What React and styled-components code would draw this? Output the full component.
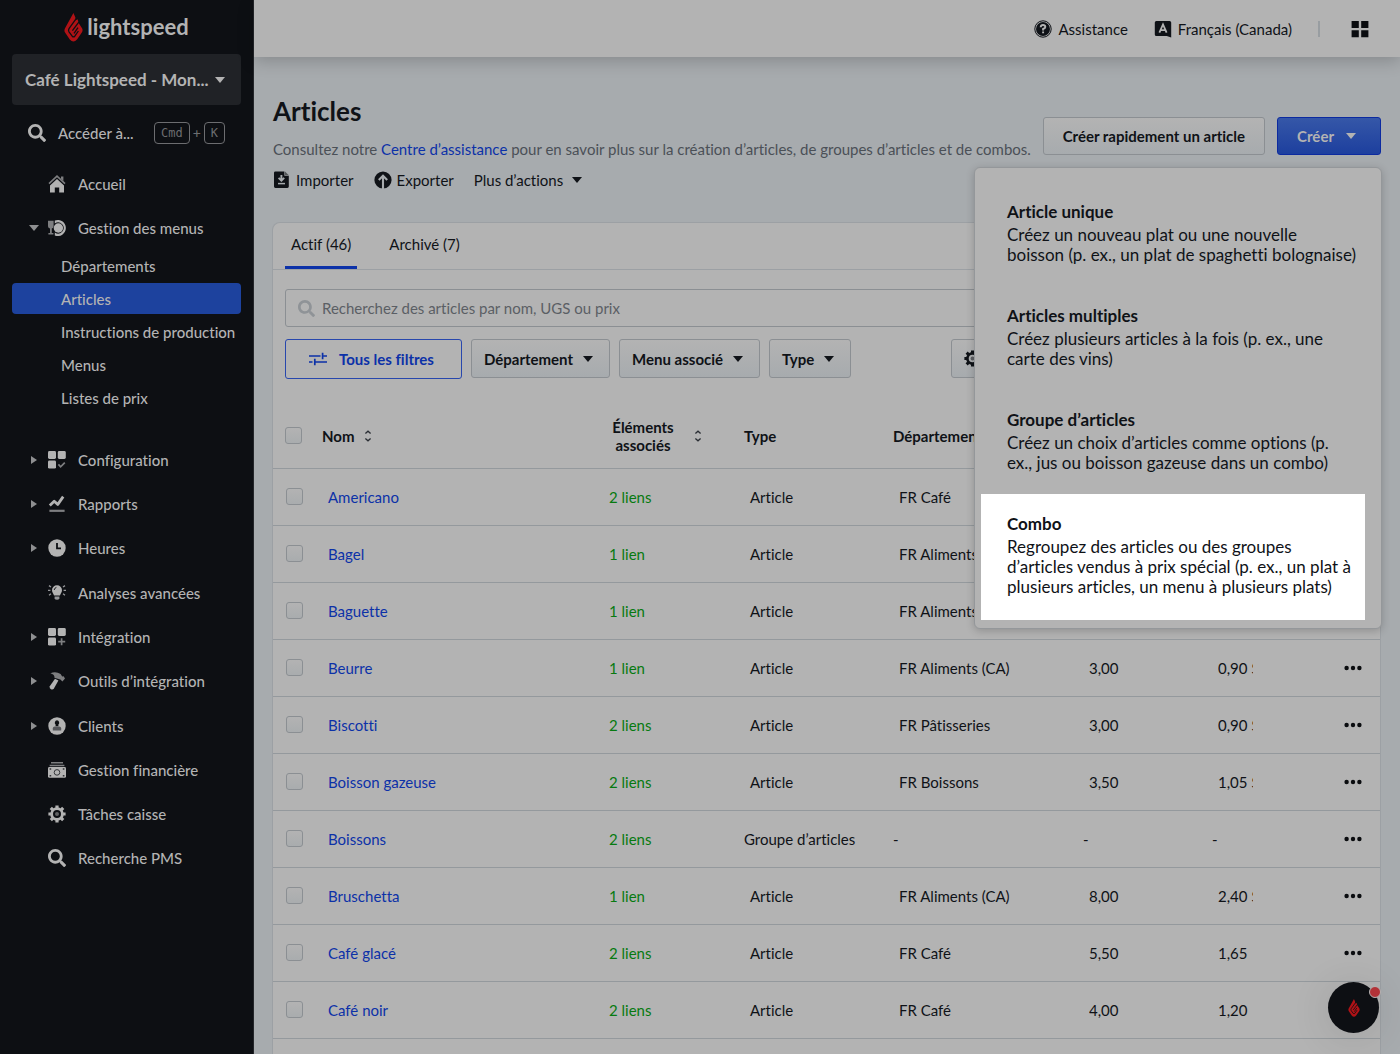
import React, { useState } from 'react';
import styled, { createGlobalStyle, css } from 'styled-components';
import { FaSearch } from 'react-icons/fa';

const GlobalStyle = createGlobalStyle`
  * {
    box-sizing: border-box;
  }

  body {
    margin: 0;
    background: #a7abae;
    color: #0f1217;
    font-family: Lato, 'Liberation Sans', sans-serif;
    font-size: 15px;
    line-height: 20px;
    font-variant-ligatures: no-common-ligatures;
  }

  button,
  input {
    font: inherit;
    font-variant-ligatures: inherit;
    color: inherit;
  }

  a {
    color: inherit;
    text-decoration: none;
  }
`;

/* ---------- Icons ---------- */

const Flame = ({ width, height }) => (
  <svg width={width} height={height} viewBox="0 0 19 29" aria-hidden="true">
    <path
      d="M9.4 0 L11.4 4.4 L11.2 7.4 L13.6 6.2 L14.8 10.2 L18.2 15.5 Q19 17.4 18 19.2 L13 26.4 Q9.4 30.4 5.8 26.4 L0.9 19.2 Q0 17.4 0.9 15.5 Z"
      fill="#b01216"
    />
    <g fill="none" stroke="#0d0f13" strokeWidth="1.3">
      <path d="M12 5.8 L5 15.6 Q4 17.2 5 18.8 L8.2 23.2 Q9.5 24.6 10.8 23.2 L14.4 18" />
      <path d="M15 8.8 L8.4 17.6" />
      <path d="M10 20.4 L14 14.6" />
    </g>
  </svg>
);

const HomeIcon = () => (
  <svg width="18" height="18" viewBox="0 0 18 18" aria-hidden="true">
    <path d="M1 8.6 L9 1.2 L17 8.6" fill="none" stroke="#7d7e80" strokeWidth="1.6" />
    <path d="M13 1.5h2.4v4.4L13 3.8z" fill="#7d7e80" />
    <path d="M9 4 L16 10.4 V17.4 H11.2 V12.4 H6.8 V17.4 H2 V10.4 Z" fill="currentColor" />
  </svg>
);

const PlateIcon = () => (
  <svg width="18" height="18" viewBox="0 0 18 18" aria-hidden="true">
    <path d="M0 1.8h5.6v5.4q0 2-1.8 2.4v4.4h1.6v1.6H0.4V14H2V9.6Q0 9.2 0 7.2z" fill="#7d7e80" />
    <path d="M6.8 1.6 A8 8 0 1 1 6.8 16.4 V13.6 A5.6 5.6 0 1 0 6.8 4.4z" fill="currentColor" />
    <circle cx="10.4" cy="9" r="4.7" fill="currentColor" />
  </svg>
);

const TilesIcon = ({ mark }) => (
  <svg width="18" height="18" viewBox="0 0 18 18" aria-hidden="true">
    <rect width="8" height="8" rx="1.4" fill="currentColor" />
    <rect x="9.8" width="8" height="8" rx="1.4" fill="currentColor" />
    <rect y="9.6" width="8" height="8" rx="1.4" fill="currentColor" />
    <path d={mark === 'plus' ? 'M13.6 10.2v7M10.2 13.7h7' : 'M10.4 13.4l2.2 2.4 4.2-4.2'} fill="none" stroke="#7d7e80" strokeWidth="1.7" />
  </svg>
);

const ChartIcon = () => (
  <svg width="18" height="18" viewBox="0 0 18 18" aria-hidden="true">
    <path d="M1.8 10.4 L6.2 6.2 L9.8 9.4 L15.2 1.6" fill="none" stroke="currentColor" strokeWidth="2.8" strokeLinejoin="round" />
    <path d="M1.4 15.8h15.2" stroke="#7d7e80" strokeWidth="2.2" />
  </svg>
);

const ClockIcon = () => (
  <svg width="18" height="18" viewBox="0 0 18 18" aria-hidden="true">
    <circle cx="9" cy="9" r="8.7" fill="currentColor" />
    <path d="M9 4v5.4h4" fill="none" stroke="#0d0f13" strokeWidth="1.8" />
  </svg>
);

const BulbIcon = () => (
  <svg width="18" height="18" viewBox="0 0 18 18" aria-hidden="true">
    <path d="M9 1.2a5 5 0 0 1 5 5c0 2.4-1.6 3.4-2 5.4H6C5.6 9.6 4 8.6 4 6.2a5 5 0 0 1 5-5z" fill="currentColor" />
    <path d="M6.6 12.6h4.8v1.6q-.4 1.6-2.4 1.6t-2.4-1.6z" fill="#96979a" />
    <path d="M0 6.4h2.4M15.6 6.4H18M1 1.6l2 1.4M17 1.6l-2 1.4M1 11.2l2-1.4M17 11.2l-2-1.4" stroke="#96979a" strokeWidth="1.3" />
    <path d="M6.2 6q.2-2 2.2-2.6" fill="none" stroke="#0d0f13" strokeWidth="0.9" />
  </svg>
);

const HammerIcon = () => (
  <svg width="18" height="18" viewBox="0 0 18 18" aria-hidden="true">
    <path d="M2.4 1.2Q8 -.8 12.6 2l1.6 2.6 1.4-.4L17 6.4l-2.6 3-2-2-1-.2-5-1.4Q7 2.6 2.4 1.2z" fill="#7d7e80" />
    <path d="M7 6.8l3.4 1.6-4.6 8.4q-1.2 1.2-2.8.4T1.6 14.4z" fill="currentColor" />
  </svg>
);

const ClientIcon = () => (
  <svg width="18" height="18" viewBox="0 0 18 18" aria-hidden="true">
    <circle cx="9" cy="9" r="8.7" fill="currentColor" />
    <path d="M9 3.2a2.3 2.5 0 0 1 1.4 4.4v1.6H7.6V7.6A2.3 2.5 0 0 1 9 3.2z" fill="#0d0f13" />
    <path d="M4.8 13.6V11.6q0-2 2-2h4.4q2 0 2 2v2z" fill="#55565a" />
  </svg>
);

const CashIcon = () => (
  <svg width="18" height="18" viewBox="0 0 18 18" aria-hidden="true">
    <path d="M3 1.8h12M1.6 4.4h14.8" stroke="#7d7e80" strokeWidth="1.5" />
    <rect y="6" width="18" height="10.8" rx="1.4" fill="currentColor" />
    <circle cx="9" cy="11.4" r="2.8" fill="none" stroke="#34363a" strokeWidth="1" />
    <path d="M1.6 8h1.6M14.8 8h1.6M1.6 14.8h1.6M14.8 14.8h1.6" stroke="#34363a" strokeWidth="1.4" />
  </svg>
);

const GearIcon = ({ size = 18 }) => (
  <svg width={size} height={size} viewBox="0 0 18 18" aria-hidden="true">
    <circle cx="9" cy="9" r="5.4" fill="none" stroke="currentColor" strokeWidth="2.8" />
    <g stroke="currentColor" strokeWidth="3.2">
      <path d="M9 .4v3M9 14.6v3M.4 9h3M14.6 9h3" />
      <path d="M2.8 2.8l2 2M13.2 13.2l2 2M2.8 15.2l2-2M13.2 4.8l2-2" />
    </g>
    <circle cx="9" cy="9" r="2" fill="currentColor" opacity="0.5" />
  </svg>
);

const ImportIcon = () => (
  <svg width="18" height="18" viewBox="0 0 18 18" aria-hidden="true">
    <path d="M2.4 .4H11.4v4.4h4.4V15.6q0 1.400-1.400 1.400H2.400Q1 17 1 15.600V1.800Q1 .4 2.400 .4z" fill="currentColor" />
    <path d="M12 .4l3.800 3.800H12z" fill="#55585b" />
    <path d="M8.4 4v5M5.6 6.800l2.800 2.800 2.800-2.800" fill="none" stroke="#a7abae" strokeWidth="1.9" />
    <path d="M5 12.600h7" stroke="#a7abae" strokeWidth="1.5" />
  </svg>
);

const ExportIcon = () => (
  <svg width="18" height="18" viewBox="0 0 18 18" aria-hidden="true">
    <circle cx="9" cy="9" r="8.6" fill="currentColor" />
    <path d="M9 18V5M4.8 9L9 4.8 13.2 9" fill="none" stroke="#a7abae" strokeWidth="2.1" />
  </svg>
);

const HelpIcon = () => (
  <svg width="18" height="18" viewBox="0 0 18 18" fill="none" aria-hidden="true">
    <circle cx="9" cy="9" r="8.2" stroke="currentColor" strokeWidth="1" />
    <circle cx="9" cy="9" r="7" fill="currentColor" />
    <path d="M6.7 7.2Q6.8 5 9 5t2.3 1.900Q11.300 8.200 9.100 9v1.400M9.100 11.500v1.800" stroke="#b3b3b3" strokeWidth="1.9" />
  </svg>
);

const LanguageIcon = () => (
  <svg width="18" height="18" viewBox="0 0 18 18" aria-hidden="true">
    <path d="M2.4 1H15.6q1.6 0 1.6 1.6V17.6L12.8 16H2.4Q.8 16 .8 14.4V2.6Q.8 1 2.4 1z" fill="currentColor" />
    <path d="M5.4 12.6L9 4.4l3.6 8.2M6.6 10.2h4.8" fill="none" stroke="#b3b3b3" strokeWidth="1.8" />
  </svg>
);

const AppsIcon = () => (
  <svg width="18" height="18" viewBox="0 0 18 18" fill="currentColor" aria-hidden="true">
    <path d="M.6 1h7.2v7H.6zM10.2 1h7.2v7h-7.2zM.6 10.2h7.2v7H.6zM10.2 10.2h7.2v7h-7.2z" />
  </svg>
);

const SlidersIcon = () => (
  <svg width="18" height="14" viewBox="0 0 18 14" fill="none" stroke="currentColor" strokeWidth="1.7" aria-hidden="true">
    <path d="M0 4h11.5M14.5 4H18M13.6 .8v6.4M0 10h3.5M5.8 6.8v6.4M6 10h12" />
  </svg>
);

const SortIcon = () => (
  <svg width="8" height="12" viewBox="0 0 8 12" fill="none" stroke="#2a2e34" strokeWidth="1.3" aria-hidden="true">
    <path d="M1.4 3.6L4 1.2l2.6 2.4M1.4 8.4L4 10.8l2.6-2.4" />
  </svg>
);

const DotsIcon = () => (
  <svg width="18" height="6" viewBox="0 0 18 6" fill="currentColor" aria-hidden="true">
    <circle cx="2.6" cy="3" r="2.2" />
    <circle cx="9" cy="3" r="2.2" />
    <circle cx="15.4" cy="3" r="2.2" />
  </svg>
);

/* ---------- Data ---------- */

const menuSubItems = ['Départements', 'Articles', 'Instructions de production', 'Menus', 'Listes de prix'];

const navSections = [
  [
    { label: 'Configuration', icon: <TilesIcon />, expandable: true },
    { label: 'Rapports', icon: <ChartIcon />, expandable: true },
    { label: 'Heures', icon: <ClockIcon />, expandable: true },
  ],
  [
    { label: 'Analyses avancées', icon: <BulbIcon /> },
    { label: 'Intégration', icon: <TilesIcon mark="plus" />, expandable: true },
    { label: 'Outils d’intégration', icon: <HammerIcon />, expandable: true },
  ],
  [
    { label: 'Clients', icon: <ClientIcon />, expandable: true },
    { label: 'Gestion financière', icon: <CashIcon /> },
    { label: 'Tâches caisse', icon: <GearIcon /> },
    { label: 'Recherche PMS', icon: <FaSearch size={18} /> },
  ],
];

const createOptions = [
  {
    title: 'Article unique',
    text: 'Créez un nouveau plat ou une nouvelle\nboisson (p. ex., un plat de spaghetti bolognaise)',
  },
  {
    title: 'Articles multiples',
    text: 'Créez plusieurs articles à la fois (p. ex., une\ncarte des vins)',
  },
  {
    title: 'Groupe d’articles',
    text: 'Créez un choix d’articles comme options (p.\nex., jus ou boisson gazeuse dans un combo)',
  },
  {
    title: 'Combo',
    text: 'Regroupez des articles ou des groupes\nd’articles vendus à prix spécial (p. ex., un plat à\nplusieurs articles, un menu à plusieurs plats)',
    highlighted: true,
  },
];

const items = [
  { name: 'Americano', links: '2 liens', type: 'Article', department: 'FR Café', price: '3,00', cost: '0,90 $' },
  { name: 'Bagel', links: '1 lien', type: 'Article', department: 'FR Aliments (CA)', price: '3,00', cost: '0,90 $' },
  { name: 'Baguette', links: '1 lien', type: 'Article', department: 'FR Aliments (CA)', price: '3,00', cost: '0,90 $' },
  { name: 'Beurre', links: '1 lien', type: 'Article', department: 'FR Aliments (CA)', price: '3,00', cost: '0,90 $' },
  { name: 'Biscotti', links: '2 liens', type: 'Article', department: 'FR Pâtisseries', price: '3,00', cost: '0,90 $' },
  { name: 'Boisson gazeuse', links: '2 liens', type: 'Article', department: 'FR Boissons', price: '3,50', cost: '1,05 $' },
  { name: 'Boissons', links: '2 liens', type: 'Groupe d’articles' },
  { name: 'Bruschetta', links: '1 lien', type: 'Article', department: 'FR Aliments (CA)', price: '8,00', cost: '2,40 $' },
  { name: 'Café glacé', links: '2 liens', type: 'Article', department: 'FR Café', price: '5,50', cost: '1,65' },
  { name: 'Café noir', links: '2 liens', type: 'Article', department: 'FR Café', price: '4,00', cost: '1,20' },
];

/* ---------- Page ---------- */

const NavItem = ({ item }) => (
  <li>
    <NavLink href="#">
      <ArrowSlot>{item.expandable && <Caret $dir={item.open ? 'down' : 'right'} />}</ArrowSlot>
      {item.icon}
      {item.label}
    </NavLink>
  </li>
);

const Sidebar = () => (
  <SidebarContainer>
    <Logo href="#">
      <Flame width={19} height={29} />
      lightspeed
    </Logo>
    <Business type="button">
      Café Lightspeed - Mon...
      <Caret />
    </Business>
    <GoTo type="button">
      <FaSearch size={18} />
      <span>Accéder à...</span>
      <Shortcut>
        <Key>Cmd</Key>+<Key>K</Key>
      </Shortcut>
    </GoTo>
    <nav aria-label="Navigation principale">
      <NavList>
        <NavItem item={{ label: 'Accueil', icon: <HomeIcon /> }} />
        <NavItem item={{ label: 'Gestion des menus', icon: <PlateIcon />, expandable: true, open: true }} />
      </NavList>
      <SubList>
        {menuSubItems.map((label) => (
          <li key={label}>
            <SubLink href="#" $active={label === 'Articles'}>{label}</SubLink>
          </li>
        ))}
      </SubList>
      <Sections>
        {navSections.map((section, index) => (
          <NavList key={index}>
            {section.map((item) => (
              <NavItem key={item.label} item={item} />
            ))}
          </NavList>
        ))}
      </Sections>
    </nav>
  </SidebarContainer>
);

const ItemRow = ({ item }) => (
  <Row>
    <td><Checkbox aria-label={`Sélectionner ${item.name}`} /></td>
    <Cell><NameLink href="#">{item.name}</NameLink></Cell>
    <Cell><LinksButton type="button">{item.links}</LinksButton></Cell>
    <Cell $flush={!item.price}>{item.type}</Cell>
    <Cell $flush={!item.price}>{item.department || '-'}</Cell>
    <Cell $flush={!item.price}>
      {item.price ? <PriceInput aria-label={`Prix de ${item.name}`} defaultValue={item.price} /> : '-'}
    </Cell>
    <Cell $flush={!item.price}>
      {item.cost ? <PriceInput aria-label={`Coût de ${item.name}`} defaultValue={item.cost} /> : '-'}
    </Cell>
    <MenuCell>
      <IconButton type="button" aria-label={`Actions pour ${item.name}`}><DotsIcon /></IconButton>
    </MenuCell>
  </Row>
);

const App = () => {
  const [tab, setTab] = useState('active');
  const [menuOpen, setMenuOpen] = useState(true);

  return (
    <Page>
      <GlobalStyle />
      <Sidebar />
      <Main>
        <TopBar>
          <TopLink href="#"><HelpIcon />Assistance</TopLink>
          <TopLink href="#"><LanguageIcon />Français (Canada)</TopLink>
          <Divider />
          <IconButton type="button" aria-label="Applications"><AppsIcon /></IconButton>
        </TopBar>

        <Content>
          <PageHeader>
            <div>
              <Title>Articles</Title>
              <Intro>
                Consultez notre <a href="#">Centre d’assistance</a> pour en savoir plus sur la création d’articles, de groupes d’articles et de combos.
              </Intro>
              <Actions>
                <TextButton type="button"><ImportIcon />Importer</TextButton>
                <TextButton type="button"><ExportIcon />Exporter</TextButton>
                <TextButton type="button">Plus d’actions<Caret $spaced /></TextButton>
              </Actions>
            </div>
            <HeaderButtons>
              <Button type="button">Créer rapidement un article</Button>
              <Button type="button" $primary aria-expanded={menuOpen} onClick={() => setMenuOpen(!menuOpen)}>
                Créer
                <Caret />
              </Button>
              {menuOpen && (
                <CreateMenu>
                  {createOptions.map((option) => (
                    <CreateOption key={option.title} type="button" $highlighted={option.highlighted}>
                      <OptionTitle>{option.title}</OptionTitle>
                      <OptionText>{option.text}</OptionText>
                    </CreateOption>
                  ))}
                </CreateMenu>
              )}
            </HeaderButtons>
          </PageHeader>

          <Card>
            <Tabs>
              <Tab type="button" $active={tab === 'active'} onClick={() => setTab('active')}>Actif (46)</Tab>
              <Tab type="button" $active={tab === 'archived'} onClick={() => setTab('archived')}>Archivé (7)</Tab>
            </Tabs>
            <Toolbar>
              <SearchBox>
                <FaSearch size={17} />
                <SearchInput type="search" aria-label="Rechercher" placeholder="Recherchez des articles par nom, UGS ou prix" />
              </SearchBox>
              <Filters>
                <AllFilters type="button"><SlidersIcon />Tous les filtres</AllFilters>
                <FilterButton type="button">Département<Caret /></FilterButton>
                <FilterButton type="button">Menu associé<Caret /></FilterButton>
                <FilterButton type="button">Type<Caret /></FilterButton>
                <ColumnsButton type="button" aria-label="Colonnes"><GearIcon size={17} /><Caret /></ColumnsButton>
              </Filters>
            </Toolbar>
            <Table>
              <colgroup>
                <Col $width={49} />
                <col />
                <Col $width={141} />
                <Col $width={149} />
                <Col $width={190} />
                <Col $width={129} />
                <Col $width={100} />
                <Col $width={68} />
              </colgroup>
              <thead>
                <tr>
                  <Th><Checkbox aria-label="Tout sélectionner" /></Th>
                  <Th><SortButton type="button">Nom<SortIcon /></SortButton></Th>
                  <Th><SortButton type="button" $wide><span>Éléments associés</span><SortIcon /></SortButton></Th>
                  <Th>Type</Th>
                  <Th>Département</Th>
                  <Th aria-label="Prix" />
                  <Th aria-label="Coût" />
                  <Th aria-label="Actions" />
                </tr>
              </thead>
              <tbody>
                {items.map((item) => (
                  <ItemRow key={item.name} item={item} />
                ))}
              </tbody>
            </Table>
          </Card>
        </Content>
      </Main>
      <ChatButton type="button" aria-label="Ouvrir le clavardage">
        <Flame width={12} height={18} />
        <Badge />
      </ChatButton>
    </Page>
  );
};

// Shared parts
const Caret = styled.span`
  flex: none;
  width: 0;
  height: 0;
  border: 5px solid transparent;
  border-top: 6px solid currentColor;
  border-bottom: 0;
  margin-left: ${({ $spaced }) => ($spaced ? '4px' : '0')};

  ${({ $dir }) =>
    $dir &&
    css`
      color: #8e8f91;
    `}

  ${({ $dir }) =>
    $dir === 'right' &&
    css`
      border: 4px solid transparent;
      border-left: 6px solid currentColor;
      border-right: 0;
    `}
`;

const IconButton = styled.button`
  display: flex;
  padding: 0;
  border: 0;
  background: none;
  color: #0a0c0f;
  cursor: pointer;
`;

const Checkbox = styled.input.attrs({ type: 'checkbox' })`
  appearance: none;
  display: block;
  width: 17px;
  height: 17px;
  margin: 0 0 0 12px;
  border: 1px solid #8b8f93;
  border-radius: 3px;
  background: linear-gradient(#b3b3b3, #a9acae);
`;

// Layout
const Page = styled.div`
  display: flex;
  height: 100vh;
  overflow: hidden;
`;

const SidebarContainer = styled.aside`
  flex: none;
  width: 254px;
  padding: 12px 12px 0 12px;
  border-right: 1px solid #24262a;
  background: #0d0f13;
  color: #b3b3b3;
  overflow: hidden;
  font-weight: 500;
`;

const Logo = styled.a`
  display: flex;
  align-items: center;
  justify-content: center;
  gap: 4px;
  height: 30px;
  font-size: 22px;
  font-weight: 700;
`;

const Business = styled.button`
  display: flex;
  align-items: center;
  justify-content: space-between;
  width: 100%;
  height: 51px;
  margin-top: 12px;
  padding: 0 16px 0 13px;
  border: 0;
  border-radius: 4px;
  background: #202226;
  font-size: 17px;
  font-weight: 700;
  white-space: nowrap;
`;

const GoTo = styled.button`
  display: flex;
  align-items: center;
  gap: 12px;
  width: 100%;
  height: 32px;
  margin-top: 12px;
  padding: 0 16px;
  border: 0;
  background: none;
  white-space: nowrap;
`;

const Shortcut = styled.span`
  display: flex;
  align-items: center;
  gap: 3px;
  margin-left: auto;
  color: #6c6d70;
  font-size: 14px;
`;

const Key = styled.kbd`
  padding: 0 6px;
  border: 1px solid #6c6d70;
  border-radius: 4px;
  font-family: 'DejaVu Sans Mono', monospace;
  font-size: 12px;
`;

const NavList = styled.ul`
  display: flex;
  flex-direction: column;
  margin: 0;
  padding: 0;
  list-style: none;

  nav > & {
    margin-top: 13px;
  }
`;

const NavLink = styled.a`
  display: flex;
  align-items: center;
  height: 44px;
  padding-left: 17px;
  white-space: nowrap;

  svg {
    margin-right: 12px;
  }
`;

const ArrowSlot = styled.span`
  display: flex;
  justify-content: center;
  width: 10px;
  margin-right: 9px;
`;

const SubList = styled.ul`
  display: flex;
  flex-direction: column;
  gap: 2px;
  margin: 0;
  padding: 0;
  list-style: none;
`;

const SubLink = styled.a`
  display: flex;
  align-items: center;
  height: 31px;
  padding-left: 49px;
  border-radius: 4px;
  background: ${({ $active }) => ($active ? '#1d429e' : 'none')};
  white-space: nowrap;
`;

const Sections = styled.div`
  display: flex;
  flex-direction: column;
  gap: 1px;
  margin-top: 25px;
`;

const Main = styled.main`
  display: flex;
  flex: 1;
  flex-direction: column;
  min-width: 0;
`;

const TopBar = styled.header`
  display: flex;
  flex: none;
  align-items: center;
  justify-content: flex-end;
  gap: 26px;
  height: 57px;
  padding-right: 31px;
  background: #b3b3b3;
  box-shadow: 0 4px 16px rgba(0, 0, 0, 0.2);
`;

const TopLink = styled.a`
  display: flex;
  align-items: center;
  gap: 6px;
`;

const Divider = styled.span`
  width: 2px;
  height: 16px;
  margin-right: 5px;
  background: #989da1;
`;

const Content = styled.div`
  display: flex;
  flex: 1;
  flex-direction: column;
  min-height: 0;
  padding: 37px 19px 0 18px;
`;

const PageHeader = styled.div`
  display: flex;
  align-items: flex-start;
  justify-content: space-between;
  padding-left: 1px;
`;

const Title = styled.h1`
  margin: 0;
  font-size: 26px;
  font-weight: 700;
  line-height: 34px;
`;

const Intro = styled.p`
  margin: 11px 0;
  color: #4b5057;

  a {
    color: #0c31a8;
  }
`;

const Actions = styled.div`
  display: flex;
  gap: 20px;
`;

const TextButton = styled.button`
  display: flex;
  align-items: center;
  gap: 5px;
  padding: 0;
  border: 0;
  background: none;
`;

const HeaderButtons = styled.div`
  position: relative;
  display: flex;
  flex: none;
  gap: 12px;
  margin-top: 23px;
`;

const Button = styled.button`
  display: flex;
  align-items: center;
  gap: 12px;
  height: 38px;
  padding: 0 19px;
  border: 1px solid #8b8f93;
  border-radius: 3px;
  background: linear-gradient(#b3b3b3, #a7abae);
  font-weight: 700;
  white-space: nowrap;

  ${({ $primary }) =>
    $primary &&
    css`
      padding: 0 24px 0 19px;
      border-color: #0c2aa0;
      background: linear-gradient(#3557a8, #1d3f9e);
      color: #b3b3b3;
    `}
`;

const CreateMenu = styled.div`
  position: absolute;
  z-index: 2;
  top: 50px;
  right: -1px;
  width: 408px;
  padding: 14px 16px 8px 6px;
  border: 1px solid #94979a;
  border-radius: 6px;
  background: #b3b3b3;
  box-shadow: 0 2px 8px rgba(0, 0, 0, 0.2);
`;

const CreateOption = styled.button`
  display: block;
  width: 100%;
  padding: 19px 4px 21px 26px;
  border: 0;
  background: none;
  text-align: left;
  font-size: 17px;

  ${({ $highlighted }) =>
    $highlighted &&
    css`
      padding-bottom: 23px;
      background: #ffffff;
    `}
`;

const OptionTitle = styled.span`
  display: block;
  font-weight: 700;
  line-height: 22px;
`;

const OptionText = styled.span`
  display: block;
  margin-top: 2px;
  line-height: 20px;
  white-space: pre-line;
`;

const Card = styled.section`
  flex: 1;
  min-height: 0;
  margin-top: 32px;
  border: 1px solid #9ca0a4;
  border-bottom: 0;
  border-radius: 8px 8px 0 0;
  background: #b3b3b3;
`;

const Tabs = styled.div`
  display: flex;
  gap: 26px;
  height: 47px;
  padding-left: 12px;
  border-bottom: 1px solid #9ca0a4;
`;

const Tab = styled.button`
  padding: 0 6px 2px;
  border: 0;
  border-bottom: 3px solid ${({ $active }) => ($active ? '#0c31a8' : 'transparent')};
  background: none;
`;

const Toolbar = styled.div`
  display: flex;
  flex-direction: column;
  gap: 12px;
  padding: 19px 12px 0;
`;

const SearchBox = styled.label`
  display: flex;
  align-items: center;
  gap: 7px;
  height: 38px;
  padding: 0 12px;
  border: 1px solid #8b8f93;
  border-radius: 3px;
  color: #8f9397;
`;

const SearchInput = styled.input`
  flex: 1;
  min-width: 0;
  padding: 0;
  border: 0;
  outline: 0;
  background: none;

  &::placeholder {
    color: #5b5f65;
    opacity: 1;
  }
`;

const Filters = styled.div`
  display: flex;
  gap: 9px;
`;

const FilterButton = styled.button`
  display: flex;
  align-items: center;
  gap: 10px;
  height: 39px;
  padding: 0 16px 0 12px;
  border: 1px solid #8b8f93;
  border-radius: 3px;
  background: linear-gradient(#b3b3b3, #a7abae);
  font-weight: 700;
  white-space: nowrap;
`;

const AllFilters = styled(FilterButton)`
  gap: 12px;
  height: 40px;
  padding: 0 27px 0 23px;
  border-color: #2847ad;
  background: none;
  color: #0c31a8;
`;

const ColumnsButton = styled(FilterButton)`
  margin-left: 91px;
`;

const Table = styled.table`
  width: 100%;
  margin-top: 25px;
  border-collapse: collapse;
  table-layout: fixed;
`;

const Col = styled.col`
  width: ${({ $width }) => $width}px;
`;

const Th = styled.th`
  height: 64px;
  padding: 0;
  border-bottom: 1px solid #94999d;
  font-weight: 700;
  text-align: left;
`;

const SortButton = styled.button`
  display: flex;
  align-items: center;
  gap: 9px;
  padding: 0;
  border: 0;
  background: none;
  font-weight: 700;
  line-height: 18px;

  svg {
    flex: none;
  }

  ${({ $wide }) =>
    $wide &&
    css`
      gap: 11px;
      width: 99px;
    `}
`;

const Row = styled.tr`
  height: 57px;

  td {
    border-bottom: 1px solid #94999d;
  }
`;

const Cell = styled.td`
  padding: 0 0 0 ${({ $flush }) => ($flush ? '0' : '6px')};
`;

const NameLink = styled.a`
  color: #0c31a8;
`;

const LinksButton = styled.button`
  padding: 0;
  border: 0;
  background: none;
  color: #077a10;
`;

const PriceInput = styled.input`
  display: block;
  width: 35px;
  padding: 0;
  border: 0;
  background: none;
`;

const MenuCell = styled.td`
  padding: 0 18px 0 0;

  button {
    margin-left: auto;
  }
`;

const ChatButton = styled.button`
  position: fixed;
  right: 21px;
  bottom: 21px;
  display: flex;
  align-items: center;
  justify-content: center;
  width: 51px;
  height: 51px;
  padding: 0;
  border: 0;
  border-radius: 50%;
  background: #0d0f13;
  box-shadow: 0 4px 40px rgba(0, 0, 0, 0.12);
`;

const Badge = styled.span`
  position: absolute;
  top: 4px;
  right: -2px;
  width: 12px;
  height: 12px;
  border: 1px solid #b3b3b3;
  border-radius: 50%;
  background: #b23237;
`;

export default App;
